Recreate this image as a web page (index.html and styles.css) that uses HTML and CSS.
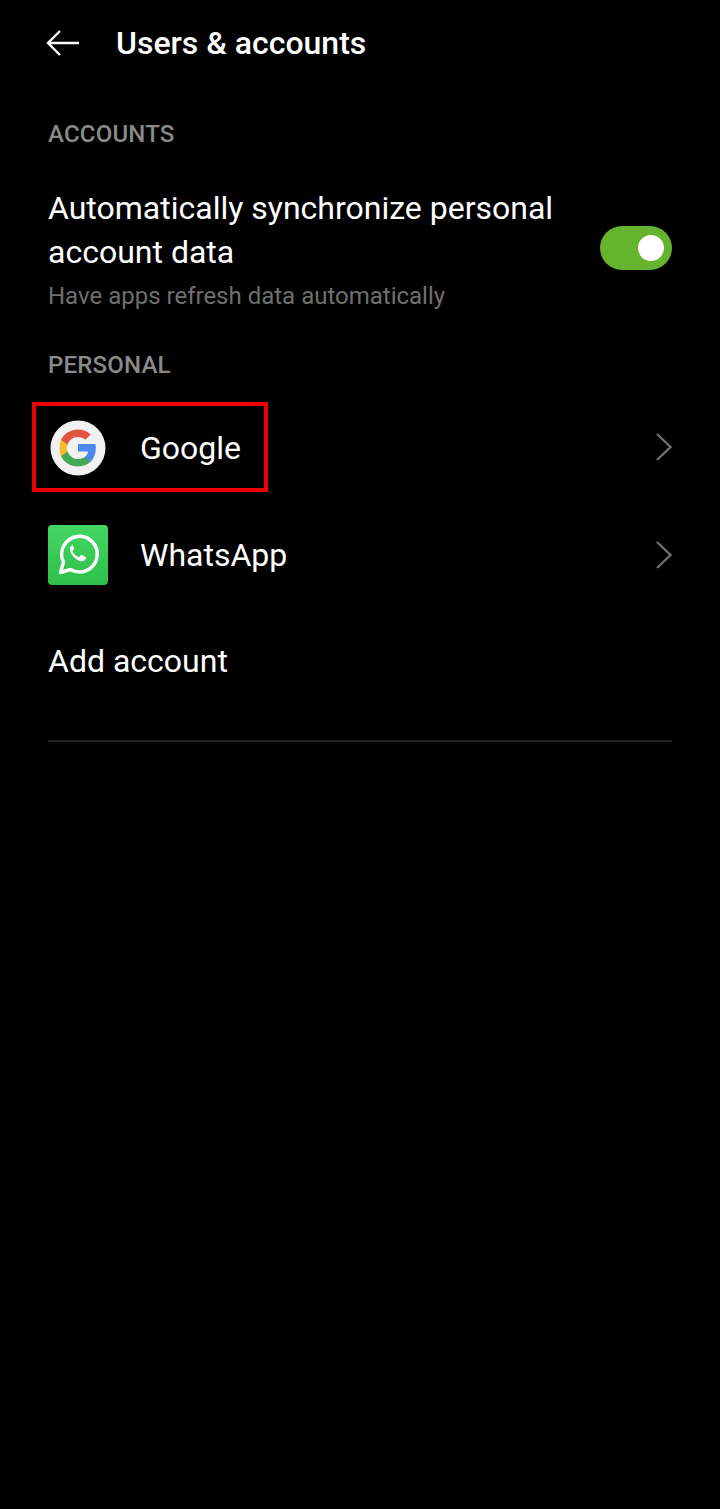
FILE: index.html
```html
<!DOCTYPE html>
<html lang="en">
<head>
    <meta charset="UTF-8">
    <meta name="viewport" content="width=device-width, initial-scale=1.0">
    <title>Users &amp; accounts</title>
    <link rel="stylesheet" href="styles.css">
</head>
<body>
    <header class="top-bar">
        <svg class="back-icon" viewBox="0 0 34 28" width="34" height="28">
            <path d="M33 14H2M14 2L2 14L14 26" fill="none" stroke="#fff" stroke-width="2.4"/>
        </svg>
        <h1>Users &amp; accounts</h1>
    </header>

    <main class="content">
        <h2 class="section-label first">ACCOUNTS</h2>

        <div class="sync-row">
            <div class="sync-text">
                <div class="sync-title">Automatically synchronize personal account data</div>
                <div class="sync-sub">Have apps refresh data automatically</div>
            </div>
            <div class="toggle"><span class="knob"></span></div>
        </div>

        <h2 class="section-label second">PERSONAL</h2>

        <!-- Google -->
        <div class="account-row google-row">
            <div class="icon-slot">
                <svg viewBox="0 0 56 56" width="56" height="56">
                    <circle cx="28" cy="28" r="27.5" fill="#f1f1f1"/>
                    <g transform="translate(28 28) scale(1.32) translate(-28 -28)">
                        <path d="M41.5 27.9c0-1-.1-2-.3-2.9H28v5.600h7.700c-.3 1.800-1.400 3.400-2.900 4.400v3.600h4.700c2.700-2.500 4-6.200 4-10.700z" fill="#4a8af0"/>
                        <path d="M28 42c3.900 0 7.100-1.300 9.500-3.500L32.800 35c-1.300.9-2.900 1.400-4.800 1.400-3.700 0-6.900-2.500-8-5.900h-4.800v3.700C17.500 39 22.400 42 28 42z" fill="#43a858"/>
                        <path d="M20 30.500c-.3-.8-.4-1.700-.4-2.500s.2-1.700.4-2.500v-3.700h-4.800C14.400 23.700 14 25.800 14 28s.4 4.300 1.200 6.200z" fill="#f5bd2c"/>
                        <path d="M28 19.600c2.100 0 4 .7 5.500 2.200l4.100-4.100C35.100 15.400 31.900 14 28 14c-5.600 0-10.500 3.200-12.800 7.800l4.800 3.700c1.100-3.400 4.300-5.900 8-5.900z" fill="#e2543f"/>
                    </g>
                </svg>
            </div>
            <span class="account-name">Google</span>
            <svg class="chevron" viewBox="0 0 18 28" width="18" height="28">
                <path d="M3 1L16.500 14L3 27" fill="none" stroke="#6e6e6e" stroke-width="2.400"/>
            </svg>
            <div class="highlight-box"></div>
        </div>

        <!-- WhatsApp -->
        <div class="account-row whatsapp-row">
            <div class="icon-slot">
                <div class="whatsapp-icon">
                    <svg viewBox="0 0 60 60" width="60" height="60">
                        <path d="M12.500 47.500L15.500 37A17.800 17.800 0 1 1 22.500 44.500z" fill="none" stroke="#fff" stroke-width="3.400" stroke-linejoin="round"/>
                        <path d="M24.500 20.500c-1 0-2.400 1.300-2.600 3.200-.2 2.400 1.100 5 3.500 7.700 2.800 3 5.800 4.600 8.300 4.800 2.200.1 4-1.300 4.200-2.900.1-.7 0-1.200-.3-1.400l-3.900-1.900c-.5-.2-.8-.1-1.100.3l-1.300 1.600c-.3.300-.6.400-.9.200-1.300-.5-2.700-1.400-3.800-2.600-.9-.9-1.600-2-2.100-3-.2-.4-.1-.6.200-.9l1.100-1.400c.3-.3.300-.6.200-1l-1.600-3.600c-.2-.5-.4-.7-.9-.7z" fill="#fff"/>
                    </svg>
                </div>
            </div>
            <span class="account-name">WhatsApp</span>
            <svg class="chevron" viewBox="0 0 18 28" width="18" height="28">
                <path d="M3 1L16.500 14L3 27" fill="none" stroke="#6e6e6e" stroke-width="2.400"/>
            </svg>
        </div>

        <div class="add-account">Add account</div>
        <div class="divider"></div>
    </main>
</body>
</html>
```

FILE: styles.css
```css
body {
    margin: 0;
    padding: 0;
    background-color: #000;
    color: #fff;
    font-family: Roboto, "Liberation Sans", sans-serif;
}

.top-bar {
    display: flex;
    align-items: center;
    height: 85px;
    padding-left: 46px;
}

.back-icon {
    flex-shrink: 0;
    margin-right: 36px;
}

.top-bar h1 {
    margin: 0;
    font-size: 32px;
    font-weight: 500;
}

.content {
    padding: 0 48px;
}

.section-label {
    margin: 0;
    font-size: 24px;
    line-height: 28px;
    font-weight: 500;
    letter-spacing: 0.2px;
    color: #8a8a8a;
}

.section-label.first {
    margin-top: 35px;
}

.section-label.second {
    margin-top: 40px;
}

.sync-row {
    display: flex;
    align-items: center;
    justify-content: space-between;
    margin-top: 38px;
}

.sync-text {
    width: 530px;
}

.sync-title {
    font-size: 32px;
    line-height: 44px;
}

.sync-sub {
    font-size: 24px;
    line-height: 30px;
    margin-top: 7px;
    color: #6f6f6f;
}

.toggle {
    display: flex;
    align-items: center;
    justify-content: flex-end;
    box-sizing: border-box;
    width: 72px;
    height: 44px;
    padding-right: 8px;
    border-radius: 22px;
    background-color: #66b32e;
    margin-bottom: 2px;
}

.knob {
    width: 26px;
    height: 26px;
    border-radius: 50%;
    background-color: #fff;
}

.account-row {
    position: relative;
    display: flex;
    align-items: center;
    height: 60px;
}

.google-row {
    margin-top: 39px;
}

.google-row .chevron {
    margin-bottom: 2px;
}

.whatsapp-row {
    margin-top: 47px;
}

.icon-slot {
    display: flex;
    align-items: center;
    justify-content: center;
    width: 60px;
    height: 60px;
    margin-right: 32px;
}

.whatsapp-icon {
    width: 60px;
    height: 60px;
    border-radius: 4px;
    background: linear-gradient(#44d663, #2fbf4a);
}

.icon-slot svg {
    display: block;
}

.account-name {
    flex: 1;
    font-size: 32px;
}

.chevron {
    flex-shrink: 0;
}

.highlight-box {
    position: absolute;
    left: -16px;
    top: -16px;
    width: 236px;
    height: 90px;
    box-sizing: border-box;
    border: 4px solid #ee0000;
}

.add-account {
    margin-top: 54px;
    font-size: 32px;
    line-height: 44px;
}

.divider {
    height: 2px;
    margin-top: 57px;
    background-color: #1f1f1f;
}
```
